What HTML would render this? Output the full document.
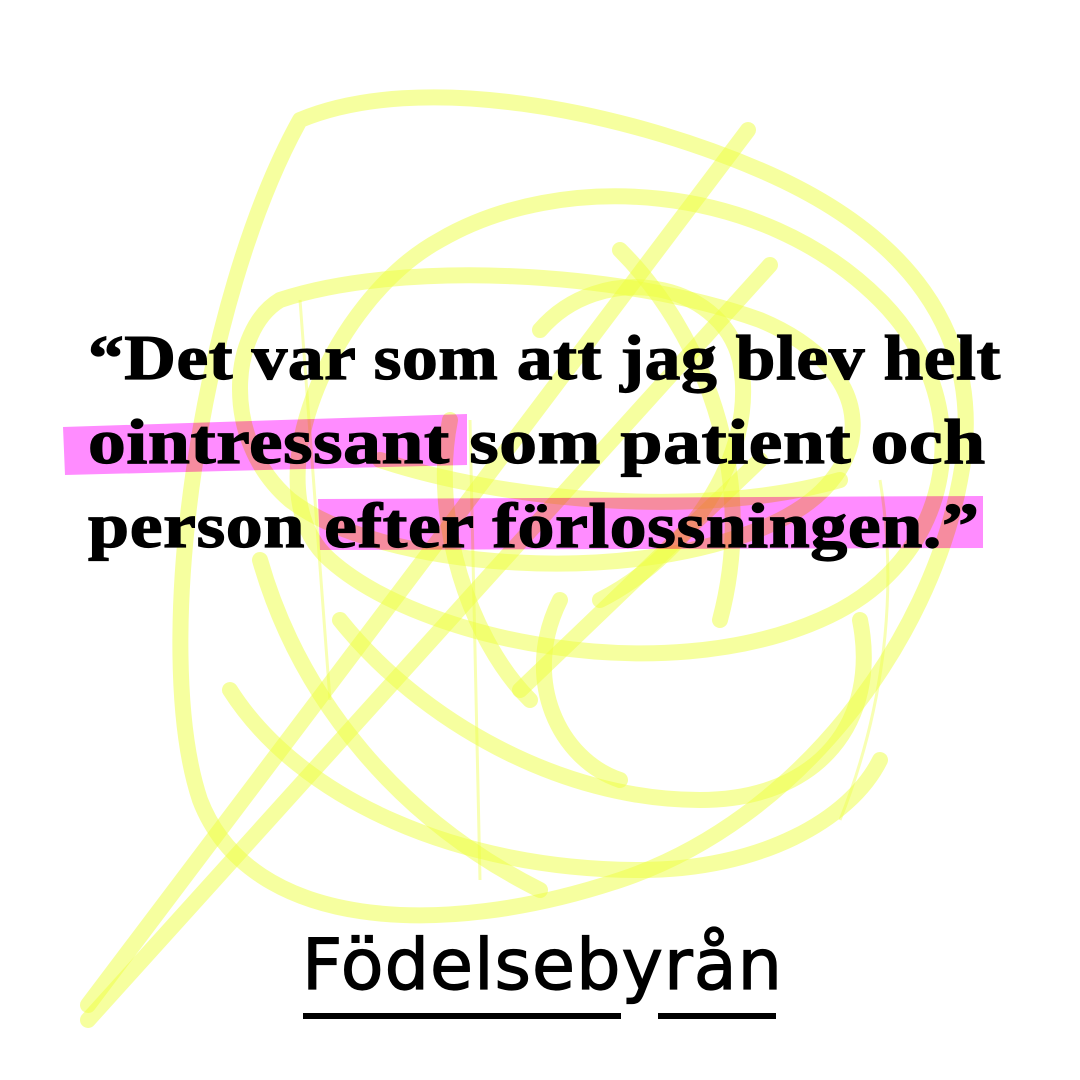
<!DOCTYPE html>
<html><head><meta charset="utf-8"><style>
html,body{margin:0;padding:0;background:#fff;}
#c{position:relative;width:1080px;height:1080px;overflow:hidden;background:#fff;}
svg{position:absolute;left:0;top:0;}
.l{position:absolute;left:88px;font-family:"Liberation Serif",serif;font-weight:bold;font-size:64px;letter-spacing:0.5px;color:#000;white-space:nowrap;line-height:1;transform-origin:0 0;-webkit-text-stroke:1.2px #000;}
.logo{position:absolute;left:302px;top:930px;font-family:"DejaVu Sans","Liberation Sans",sans-serif;font-size:70px;letter-spacing:1px;color:#000;line-height:1;-webkit-text-stroke:1.2px #000;}
</style></head><body><div id="c">
<svg width="1080" height="1080" viewBox="0 0 1080 1080">
<g fill="none" stroke="#eeff40" stroke-opacity="0.5" stroke-width="16" stroke-linecap="round">
<path d="M300 120 C420 70 620 110 760 170 C900 230 990 330 960 480 C930 640 800 820 620 880 C440 940 250 930 200 800 C150 650 200 300 300 120"/>
<path d="M88 1005 L748 130"/>
<path d="M88 1020 L770 265"/>
<path d="M440 240 C560 170 760 180 880 300 C980 400 960 560 820 620 C660 690 420 640 330 560 C250 490 330 300 440 240"/>
<path d="M280 300 C400 260 620 270 760 320 C880 370 880 470 780 520 C640 590 380 570 290 500 C220 440 230 330 280 300"/>
<path d="M340 620 C420 720 560 800 700 800 C820 800 880 720 860 620"/>
<path d="M230 690 C300 800 460 870 640 870 C760 870 850 820 880 760"/>
<path d="M540 330 C600 260 720 280 740 360 C760 460 680 560 600 600"/>
<path d="M560 600 C520 680 560 760 620 780"/>
<path d="M520 690 L760 460"/>
<path d="M450 420 C430 520 470 640 530 700"/>
<path d="M620 250 C700 330 760 470 720 620"/>
<path d="M260 560 C300 700 400 820 540 890"/>
<path d="M380 460 C500 500 700 520 840 480"/>
</g>
<g fill="none" stroke="#eeff40" stroke-opacity="0.4" stroke-width="3">
<path d="M470 420 L480 880"/><path d="M880 480 C900 600 880 720 840 820"/><path d="M300 300 L330 700"/>
</g>
<g style="mix-blend-mode:multiply">
<polygon points="63,427 467,414 467,465 65,475" fill="#ff8cff"/>
<polygon points="318,499 983,496 983,548 320,550" fill="#ff8cff"/>
</g>
</svg>
<div class="l" style="top:326px;transform:scaleX(1.117)">“Det var som att jag blev helt</div>
<div class="l" style="top:410px;transform:scaleX(1.18)">ointressant som patient och</div>
<div class="l" style="top:494px;transform:scaleX(1.155)">person efter förlossningen.”</div>
<div class="logo">Födelsebyrån</div>
<div style="position:absolute;left:303px;top:1013px;width:318px;height:6px;background:#000"></div>
<div style="position:absolute;left:658px;top:1013px;width:118px;height:6px;background:#000"></div>
</div></body></html>
